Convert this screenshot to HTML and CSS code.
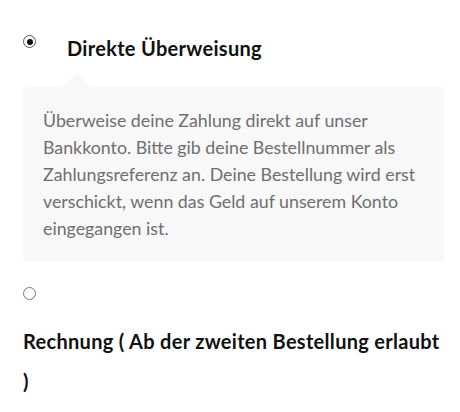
FILE: index.html
```html
<!DOCTYPE html>
<html lang="de">
<head>
<meta charset="utf-8">
<link rel="stylesheet" href="styles.css">
</head>
<body>
<ul class="methods">
  <li class="method method--active">
    <div class="method-head">
      <span class="radio radio--checked"></span>
      <label class="method-label method-label--inline">Direkte Überweisung</label>
    </div>
    <div class="method-box">
      <p>Überweise deine Zahlung direkt auf unser Bankkonto. Bitte gib deine Bestellnummer als Zahlungsreferenz an. Deine Bestellung wird erst verschickt, wenn das Geld auf unserem Konto eingegangen ist.</p>
    </div>
  </li>
  <li class="method">
    <span class="radio"></span>
    <label class="method-label">Rechnung ( Ab der zweiten Bestellung erlaubt )</label>
  </li>
</ul>
</body>
</html>
```

FILE: styles.css
```css
html, body {
  margin: 0;
  padding: 0;
  background: #ffffff;
}

body {
  font-family: "Lato", "Noto Sans", sans-serif;
  color: #111111;
}

.methods {
  list-style: none;
  margin: 0;
  padding: 35px 16px 0 23px;
}

.method-head {
  display: flex;
  align-items: flex-start;
}

.radio {
  display: block;
  box-sizing: border-box;
  width: 13px;
  height: 13px;
  border-radius: 50%;
  border: 1.5px solid #777777;
  flex: none;
  position: relative;
}

.radio--checked {
  border-color: #555555;
}

.radio--checked::after {
  content: "";
  position: absolute;
  left: 50%;
  top: 50%;
  width: 6px;
  height: 6px;
  margin: -3px 0 0 -3px;
  border-radius: 50%;
  background: #111111;
}

.method-label {
  font-size: 20px;
  font-weight: 700;
  letter-spacing: 0.3px;
  color: #111111;
}

.method-label--inline {
  margin-left: 31px;
  margin-top: 1px;
  line-height: 24px;
}

.method-box {
  position: relative;
  margin-top: 27px;
  background: #f8f8f8;
  border-radius: 3px;
  padding: 20px 20px 20px 20px;
}

.method-box::before {
  content: "";
  position: absolute;
  left: 40px;
  top: -14px;
  border-left: 14px solid transparent;
  border-right: 14px solid transparent;
  border-bottom: 14px solid #f8f8f8;
}

.method-box p {
  margin: 0;
  font-size: 17.8px;
  line-height: 27px;
  color: #6e6e6e;
}

.method + .method {
  margin-top: 25px;
}

.method:last-child .method-label {
  display: block;
  margin-top: 21px;
  line-height: 40px;
}
```
